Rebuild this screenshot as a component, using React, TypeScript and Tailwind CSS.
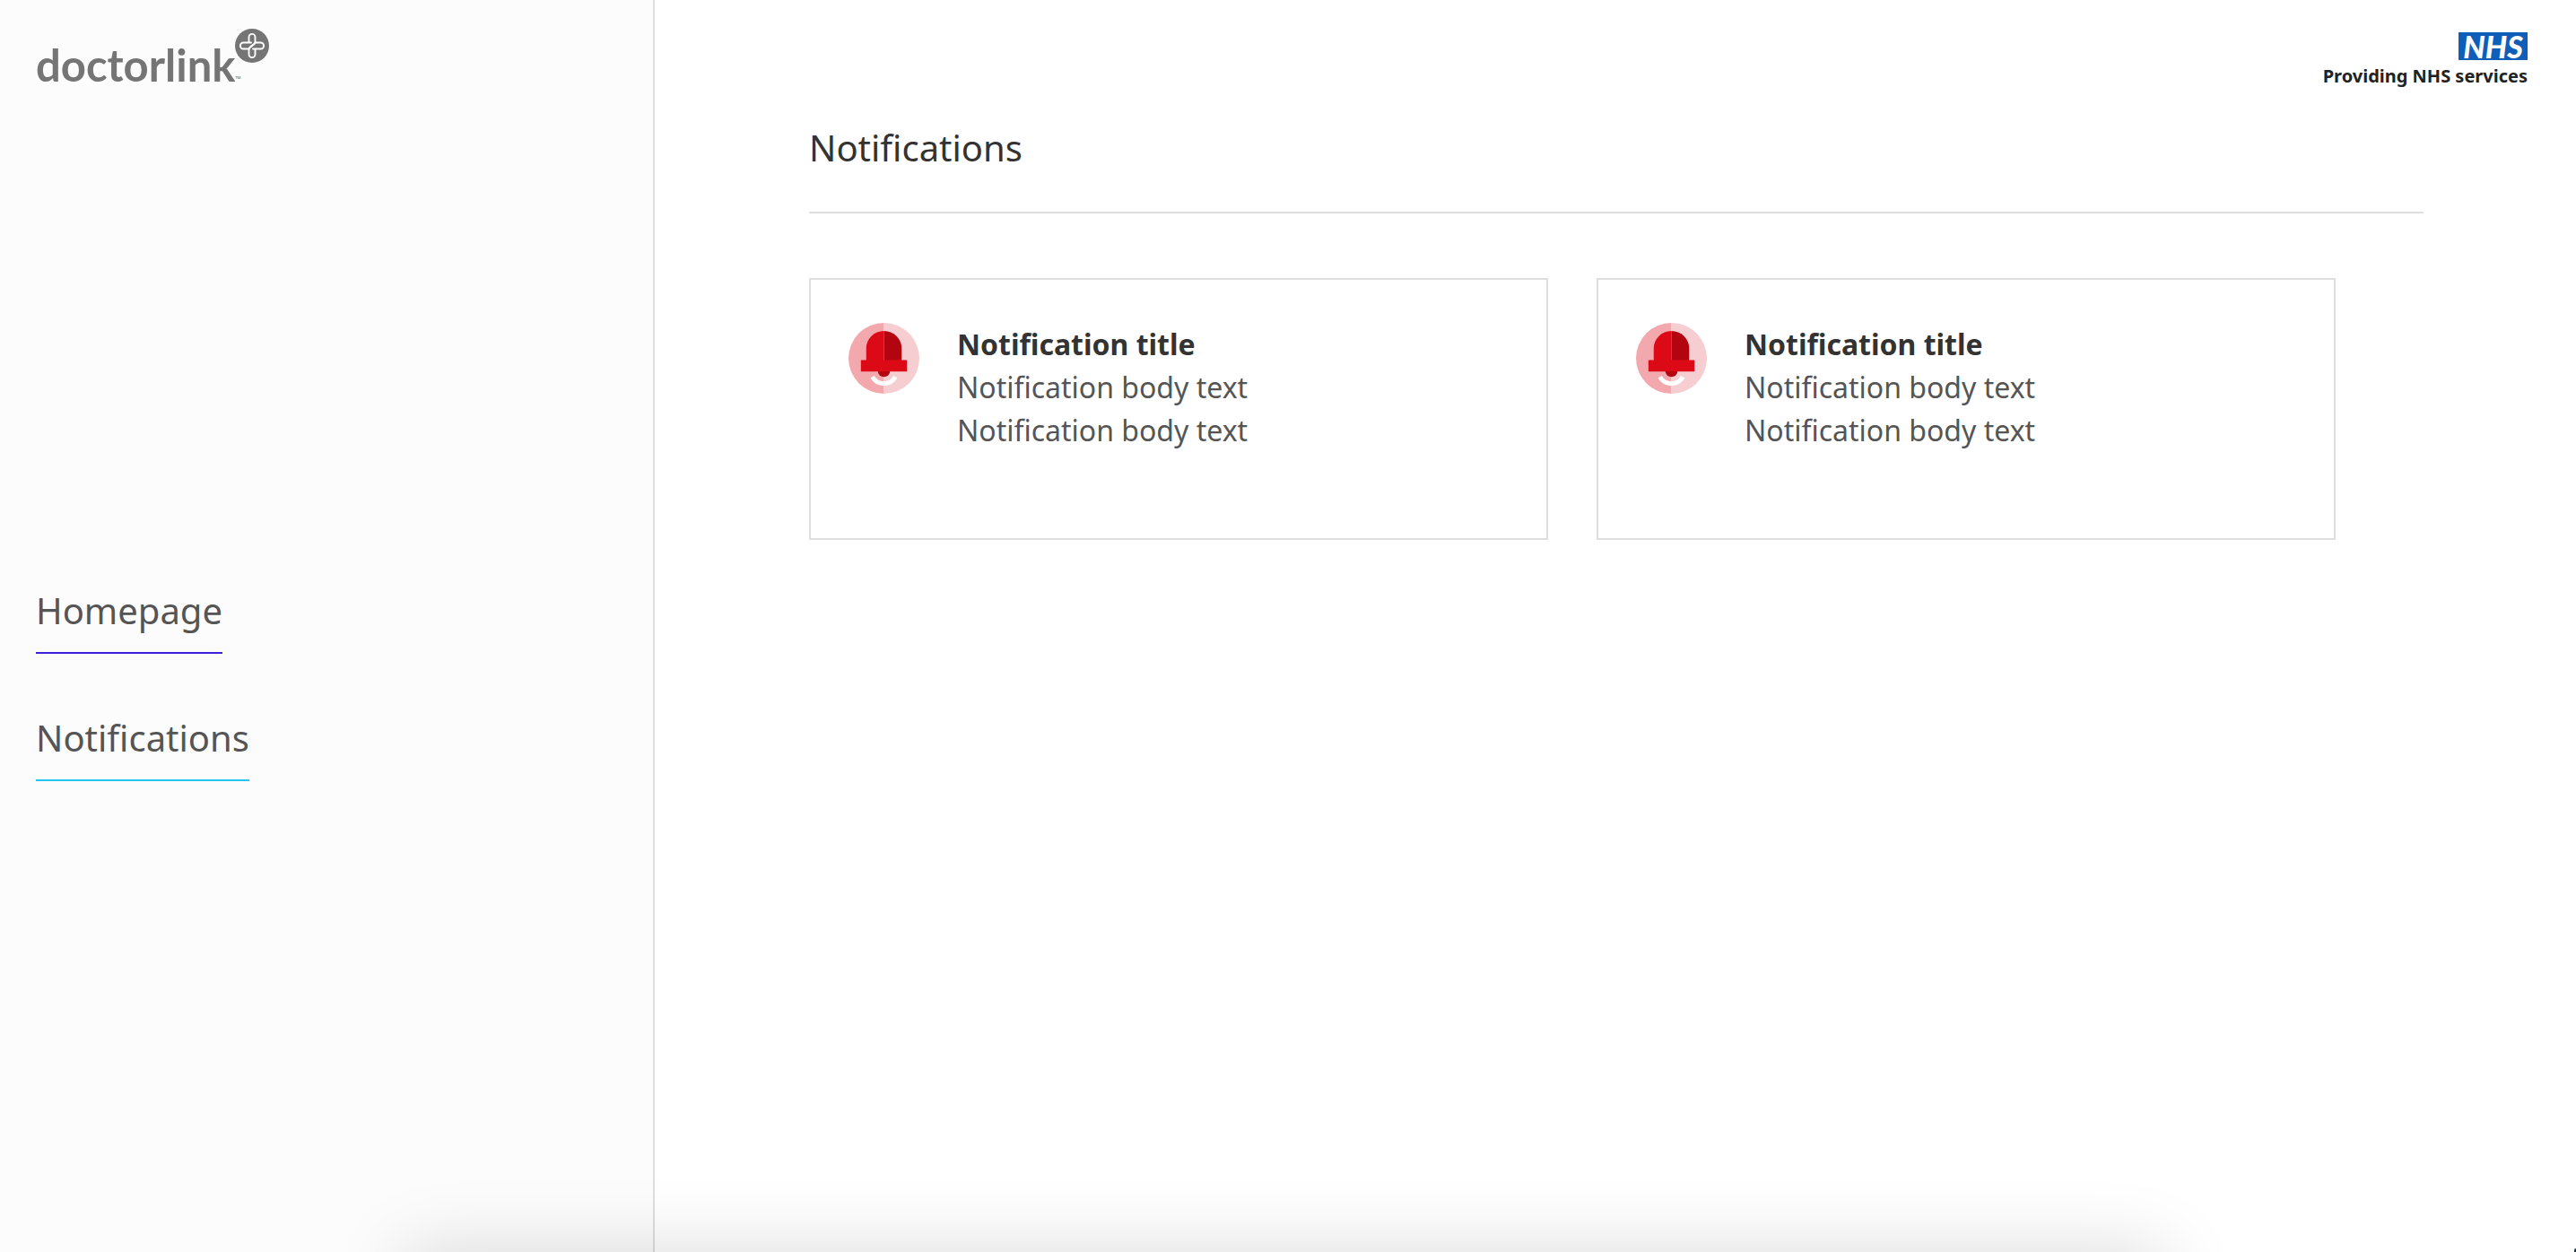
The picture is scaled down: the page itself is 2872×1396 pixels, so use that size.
import React from "react";

const links = [
  { label: "Homepage", border: "border-[#3f1fdb]" },
  { label: "Notifications", border: "border-[#24c4f4]" },
];

const notifications = [
  { title: "Notification title", lines: ["Notification body text", "Notification body text"] },
  { title: "Notification title", lines: ["Notification body text", "Notification body text"] },
];

function LinkBadge() {
  return (
    <svg viewBox="0 0 38 38" className="size-[38px] shrink-0" aria-hidden="true">
      <circle cx="19" cy="19" r="19" fill="#757575" />
      <g fill="none" stroke="#fff" strokeWidth="1.9" strokeLinecap="round">
        <path d="M15.500 15V9.400a3.500 3.500 0 0 1 7 0v5.400c0 2.500-3.500 4.500-6 6.200" />
        <path d="M22.500 23v5.600a3.500 3.500 0 0 1-7 0v-5.400c0-2.500 3.500-4.500 6-6.200" />
        <path d="M18 15.500H9.400a3.500 3.500 0 0 0 0 7h6.200" />
        <path d="M20 22.500h8.600a3.500 3.500 0 0 0 0-7h-6.200" />
      </g>
    </svg>
  );
}

function BellIcon() {
  return (
    <svg viewBox="0 0 80 80" className="size-[79px] shrink-0" aria-hidden="true">
      <path d="M40 0a40 40 0 0 0 0 80z" fill="#f3a8ad" />
      <path d="M40 0a40 40 0 0 1 0 80z" fill="#f6cdd0" />
      <path d="M27 61a15 15 0 0 0 26 0" fill="none" stroke="#fff" strokeWidth="5" />
      <path d="M33 54a7 7 0 0 0 14 0z" fill="#b2050f" />
      <path d="M20 43V29a20 20 0 0 1 20-20v34z" fill="#db0a16" />
      <path d="M60 43V29a20 20 0 0 0-20-20v34z" fill="#b2050f" />
      <path d="M14 42h52v13H14z" fill="#db0a16" />
    </svg>
  );
}

export default function App() {
  return (
    <div className="relative flex min-h-screen overflow-hidden bg-white font-['Noto_Sans',sans-serif] text-[#333]">
      <aside className="w-[730px] shrink-0 border-r-2 border-[#dedede] bg-[#fcfcfc] px-10 pt-8">
        <a href="#" aria-label="doctorlink" className="flex h-[68px] items-start text-[#757575]">
          <span className="pt-3 font-['Lato',sans-serif] text-[49px] leading-[56px] font-bold">doctorlink</span>
          <span className="flex flex-col gap-3">
            <LinkBadge />
            <span className="text-[8px] leading-[12px]">™</span>
          </span>
        </a>
        <nav className="mt-[551px] flex flex-col items-start gap-16">
          {links.map((l) => (
            <a key={l.label} href="#" className={`border-b-2 pb-4 text-[40px] leading-[60px] text-[#555] ${l.border}`}>
              {l.label}
            </a>
          ))}
        </nav>
      </aside>

      <main className="min-w-0 flex-1">
        <header className="flex flex-col items-end pt-9 pr-[54px]">
          <div className="h-[31px] w-[77px] bg-[#0f5eb8] text-center font-['Lato',sans-serif] text-[34px] leading-[31px] font-black text-white italic">
            NHS
          </div>
          <p className="mt-1 text-xl leading-7 font-bold text-[#222]">Providing NHS services</p>
        </header>
        <section className="mr-[170px] ml-[172px] pt-9">
          <h1 className="border-b-2 border-[#dedede] pb-[41px] text-[40px] leading-[60px]">Notifications</h1>
          <div className="mt-[72px] mr-[98px] grid grid-cols-2 gap-[54px]">
            {notifications.map((n, i) => (
              <article key={i} className="flex min-h-[292px] items-start gap-[42px] border-2 border-[#dedede] px-[42px] py-12">
                <BellIcon />
                <div className="text-[32px] leading-[48px] text-[#555]">
                  <h2 className="font-bold text-[#333]">{n.title}</h2>
                  {n.lines.map((t, j) => (
                    <p key={j}>{t}</p>
                  ))}
                </div>
              </article>
            ))}
          </div>
        </section>
      </main>

      <div className="pointer-events-none absolute top-full right-[460px] left-[452px] h-40 shadow-[0_0_84px_rgba(0,0,0,0.15)]" />
      <div className="pointer-events-none absolute right-0 bottom-0 h-1 w-0.5 rounded-tl-full bg-[#1d3a52]" />
    </div>
  );
}
